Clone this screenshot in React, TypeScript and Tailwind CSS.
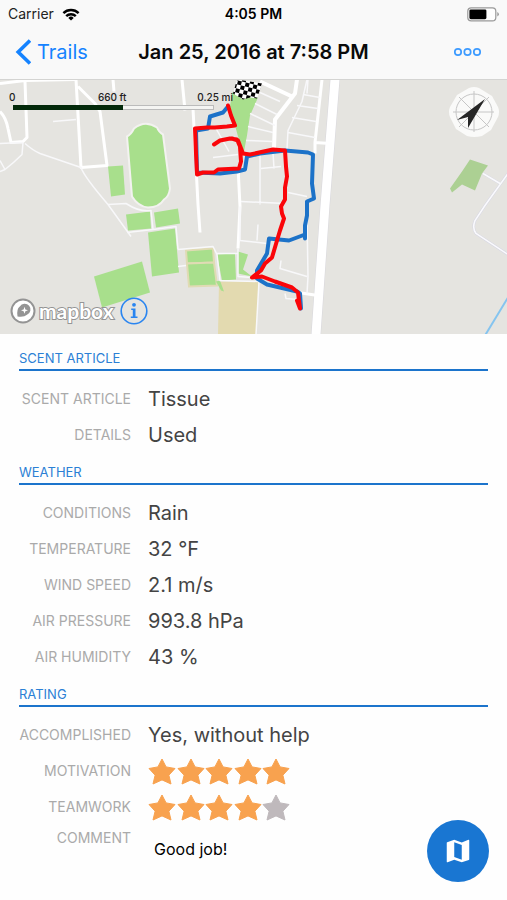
import { useState } from "react";
import type { ReactNode } from "react";
import { MdMap } from "react-icons/md";

const STAR_COUNT = 5;

function Star({ filled }: { filled: boolean }) {
  return (
    <svg viewBox="0 0 28 27" className={filled ? "w-7 h-[27px] text-[#f8a24f]" : "w-7 h-[27px] text-[#bfb9bc]"}>
      <path
        d="M14 1 18.1 8.900 27 10.500 20.900 17.200 23 26 14 21.900 5 26 7.100 17.200 1 10.500 9.900 8.900Z"
        fill="currentColor"
        stroke="currentColor"
        strokeWidth="1"
        strokeLinejoin="round"
      />
    </svg>
  );
}

function Stars({ value }: { value: number }) {
  return (
    <div role="img" aria-label={`${value} of ${STAR_COUNT} stars`} className="flex justify-between w-[142px]">
      {Array.from({ length: STAR_COUNT }, (_, i) => (
        <Star key={i} filled={i < value} />
      ))}
    </div>
  );
}

function Section({ title, children }: { title: string; children: ReactNode }) {
  return (
    <section>
      <h2 className="mx-[19px] py-px text-[13px] leading-5 text-[#2b80d5] border-b-2 border-[#1c74cc]">{title}</h2>
      <dl className="pt-[10px]">{children}</dl>
    </section>
  );
}

function Row({ label, children }: { label: string; children: ReactNode }) {
  return (
    <div className="flex items-center gap-[17px] h-9">
      <dt className="w-[131px] shrink-0 text-right text-sm text-[#aaa] whitespace-nowrap">{label}</dt>
      <dd className="text-xl text-[#444]">{children}</dd>
    </div>
  );
}

function StatusBar() {
  return (
    <div className="grid grid-cols-3 items-center h-7 pl-2 pr-2 text-sm leading-5 text-[#222]">
      <div className="flex items-center gap-2">
        <span>Carrier</span>
        <svg viewBox="0 0 18 13" className="w-[18px] h-[13px]" fill="none" stroke="#000" strokeWidth="2.4">
          <path d="M1.4 5.2A10.8 10.8 0 0 1 16.6 5.2" />
          <path d="M4.2 8.2A6.8 6.8 0 0 1 13.8 8.2" />
          <path d="M9 12.6 6.3 9.9A3.8 3.8 0 0 1 11.7 9.9Z" fill="#000" stroke="none" />
        </svg>
      </div>
      <span className="text-center font-semibold text-black whitespace-nowrap">4:05 PM</span>
      <svg viewBox="0 0 32 15" className="justify-self-end w-8 h-[15px]">
        <rect x="0.8" y="0.8" width="28" height="13" rx="3.4" fill="#fff" stroke="#999" strokeWidth="1.2" />
        <rect x="2.4" y="2.4" width="17" height="9.8" rx="1.4" fill="#000" />
        <path d="M30.3 5v4.6q1.6-.8 1.6-2.3T30.3 5Z" fill="#999" />
      </svg>
    </div>
  );
}

function NavBar() {
  return (
    <nav className="relative h-[51px] pl-[15px] pr-6 pb-1 flex items-center justify-between">
      <a href="#trails" className="flex items-center gap-1.5 text-xl text-[#1583ff]">
        <svg viewBox="0 0 16 26" className="w-4 h-[26px]" fill="none" stroke="currentColor" strokeWidth="3.6">
          <path d="M15 1.5 3.2 13 15 24.5" />
        </svg>
        Trails
      </a>
      <h1 className="absolute inset-x-0 text-center text-xl font-semibold text-[#0a0a0a] pointer-events-none">
        Jan 25, 2016 at 7:58 PM
      </h1>
      <button type="button" aria-label="More">
        <svg viewBox="0 0 30 10" className="w-[30px] h-2.5" fill="none" stroke="#3d9bff" strokeWidth="1.7">
          <circle cx="5" cy="5" r="3.2" />
          <circle cx="14.5" cy="5" r="3.2" />
          <circle cx="24" cy="5" r="3.2" />
        </svg>
      </button>
    </nav>
  );
}

function TrailMap() {
  return (
    <svg viewBox="0 79 507 255" preserveAspectRatio="xMidYMid slice" className="block w-full h-full">
      <defs>
        <pattern id="checker" width="8" height="8" patternUnits="userSpaceOnUse" patternTransform="translate(238 80) rotate(14)">
          <rect width="8" height="8" fill="#fff" />
          <path d="M0 0h4v4h-4zM4 4h4v4h-4z" fill="#000" />
        </pattern>
      </defs>
      <rect y="79" width="507" height="255" fill="#e5e4e0" />

      {/* parks and fields */}
      <g fill="#a8df8c">
        <path d="M108 166 123 165 125 194 111 196Z" />
        <path d="M126 214 150 211 151 228 128 230Z" />
        <path d="M154 212 178 208 180 223 156 227Z" />
        <path d="M148 232 175 228 179 272 152 276Z" />
        <path d="M94 276 142 261 150 292 102 307Z" />
        <path d="M232 92 258 97 250 115 247 135 244 151 238 136 230 106Z" />
        <path d="M217 254 235 253 236 279 222 280Z" />
        <path d="M238 251 248 254 243 269 252 276 238 273Z" />
      </g>
      <path
        d="M127 136Q131 134 134 128 145 119 157 127 159 132 163 134L170 188Q169 196 164 199 159 207 148 207 138 206 132 196Z"
        fill="#a8df8c"
        stroke="#f3f2f0"
        strokeWidth="2"
      />
      <g fill="#a8df8c" stroke="#e0dbb4" strokeWidth="2">
        <path d="M186 250 213 248 214 262 187 263Z" />
        <path d="M187 263 214 262 217 285 189 286Z" />
      </g>
      <path d="M219 281 259 281 256 334 218 334Z" fill="#e3dab0" />
      <path d="M216 281 220 280 224 291 221 290Z" fill="#a8df8c" />
      <path d="M470 159 488 165 482 173 475 190 462 184 452 192 450 188 462 171Z" fill="#acd093" />

      {/* main roads */}
      <g fill="none" stroke="#fff" strokeLinejoin="round">
        <path d="M335 79 325 205 316 334" stroke="#d8d7dc" strokeWidth="10" />
        <path d="M335 79 325 205 316 334" strokeWidth="9" />
        <path d="M0 111Q6 117 8 128L11 142 23 141 27 137 25 81M0 83 25 80 75 79" strokeWidth="3" />
        <path d="M76 79 81 167 107 165 100 111 95 103 78 86M113 79 114 91" strokeWidth="3" />
        <path d="M182 79 185 110M193 108 198 204 200 232M238 166 240 206 238 248" strokeWidth="3" />
        <path d="M297 79 295 93 275 119 274 148M260 81 292 96" strokeWidth="4" />
        <path d="M322 79 315 142 315 153M315 142 330 143M298 292 318 295" strokeWidth="3" />
      </g>

      {/* paths and parcel lines */}
      <g fill="none" stroke="#f8f8fa" strokeWidth="1.5" strokeLinejoin="round">
        <path d="M0 143 23 142 22 154Q14 162 5 169L0 171M0 160 5 169" />
        <path d="M25 143Q33 150 40 153L81 167Q84 176 108 204L131 236" />
        <path d="M108 204 126 203Q140 212 151 210L153 229 176 226 178 249M153 229 127 232M53 121 76 119" />
        <path d="M178 249 213 246 217 254 220 280 259 281 256 334M178 266 186 265M217 253 238 253" />
        <path d="M238 248 238 276 252 277M240 206 240 240 267 243M258 224 257 240" />
        <path d="M260 92 280 101M255 103 277 114M250 113 275 125M248 126 273 132M246 140 273 141" />
        <path d="M307 79 302 101 288 130 287 149M303 94 320 97M297 105 318 108M292 117 316 121M288 132 315 137M308 79 307 93" />
        <path d="M260 154 260 204M241 201 285 203M213 157 238 154M216 128 229 151M273 152 274 168M261 168 281 166M288 192 307 196" />
        <path d="M307 216 308 276 307 293M281 260 280 268 307 276M285 293 286 298 298 299" />
      </g>
      <path
        d="M508 173 485 205 475 220Q472 228 476 233L508 254M483 173 500 183"
        fill="none"
        stroke="#d6d6e4"
        strokeWidth="2.6"
      />
      <path
        d="M508 173 485 205 475 220Q472 228 476 233L508 254M483 173 500 183"
        fill="none"
        stroke="#fafafc"
        strokeWidth="1.6"
      />
      <path d="M508 297 485 335" stroke="#85c4ef" strokeWidth="2" />
      <path d="M237 79 262 83 257 98 250 97 243 99 233 93Z" fill="url(#checker)" />

      {/* runner and dog tracks */}
      <g fill="none" strokeWidth="4" strokeLinecap="round" strokeLinejoin="round">
        <path
          d="M228 106 223 112 210 116 208 128 196 130 197 172 220 173 237 171 245 169 247 156 260 153 285 150 308 152 313 154 312 183 314 198 307 201 307 215 305 225 305 238 305 234 289 240 269 238 267 253 257 270 257 278 267 284 297 291 300 293 301 308"
          stroke="#1c72c8"
        />
        <path
          d="M228 105 231 115 235 125 227 126 215 127 207 127 195 128 196 153 197 174 203 172 214 172 218 169 239 168 241 161 240 146 237 139 230 138 220 140 214 144M232 138 238 140 243 153 250 154 273 149 285 150 286 166 287 176 285 187 285 199 281 206 282 213 284 218 280 230 277 240 272 257 265 263 261 270 252 277 262 276 275 281 292 287 298 292 300 308 297 300"
          stroke="#fa0509"
        />
      </g>
    </svg>
  );
}

function ScaleBar() {
  return (
    <div className="absolute left-[13px] top-[11px] w-[201px] text-[10px] leading-3 font-medium text-[#222]">
      <div className="flex justify-between -ml-1 -mr-[19px]">
        <span className="w-[18px]">0</span>
        <span>660 ft</span>
        <span>0.25 mi</span>
      </div>
      <div className="mt-0.5 h-[5px] bg-[#f4f4f2] border border-[#bbb]">
        <div className="-m-px w-[110px] h-[5px] bg-[#03290a]" />
      </div>
    </div>
  );
}

function Compass() {
  return (
    <button type="button" aria-label="Reset north" className="absolute right-2 top-[7px]">
      <svg viewBox="-25 -25 50 50" className="block w-[50px] h-[50px]">
        <path
          d="M-5-24Q0-26 5-24L18-16 24-5Q26 0 24 5L17 18 8 24Q0 26-7 24L-18 17-24 5Q-26 0-24-5L-17-17Z"
          fill="#fafaf9"
        />
        <g fill="none" stroke="#c6c6c6" strokeWidth="1">
          <circle r="18" />
          <path d="M0-21V20M-21 0H20M-15-15 15 15M-15 15 15-15" />
        </g>
        <path d="M11-13-6 16-6 5-17 8Z" fill="#262626" />
      </svg>
    </button>
  );
}

function Attribution() {
  return (
    <div className="absolute left-[10px] bottom-[9px] flex items-center">
      <a href="#mapbox" className="flex items-center gap-[3px]">
        <svg viewBox="0 0 26 26" className="w-[26px] h-[26px]">
          <circle cx="13" cy="13" r="11.5" fill="#fff" stroke="#949494" strokeWidth="2" />
          <path d="M7.500 18.500Q6.300 11 9.800 8.400A5.800 5.800 0 1 1 17 16.800Q14 19.500 7.500 18.500Z" fill="#949494" />
          <path d="M14.500 8.800 15.400 11.400 18 12.300 15.400 13.200 14.500 15.800 13.600 13.200 11 12.300 13.600 11.400Z" fill="#fff" />
        </svg>
        <span className="font-['Lato',sans-serif] text-[21px] leading-6 font-bold text-white [-webkit-text-stroke:2px_#949494] [paint-order:stroke_fill]">
          mapbox
        </span>
      </a>
      <button type="button" aria-label="Map information" className="ml-[6px]">
        <svg viewBox="0 0 28 28" className="block w-7 h-7">
          <circle cx="14" cy="14" r="12.8" fill="none" stroke="#2a85f0" strokeWidth="1.6" />
          <circle cx="14" cy="7.800" r="1.900" fill="#2a85f0" />
          <path d="M11.200 11.500H15.500V19.500H17.500V21H10.800V19.500H12.800V13H11.200Z" fill="#2a85f0" />
        </svg>
      </button>
    </div>
  );
}

export default function App() {
  const [comment, setComment] = useState("Good job!");

  return (
    <div className="min-h-screen bg-[#fefefe] font-['Inter','Liberation_Sans',sans-serif]">
      <header className="bg-[#f9f9f9] border-b border-[#d4d4d2]">
        <StatusBar />
        <NavBar />
      </header>

      <div className="relative h-[254px] overflow-hidden">
        <TrailMap />
        <ScaleBar />
        <Compass />
        <Attribution />
      </div>

      <main className="flex flex-col gap-2 pt-[13px]">
        <Section title="SCENT ARTICLE">
          <Row label="SCENT ARTICLE">Tissue</Row>
          <Row label="DETAILS">Used</Row>
        </Section>

        <Section title="WEATHER">
          <Row label="CONDITIONS">Rain</Row>
          <Row label="TEMPERATURE">32 °F</Row>
          <Row label="WIND SPEED">2.1 m/s</Row>
          <Row label="AIR PRESSURE">993.8 hPa</Row>
          <Row label="AIR HUMIDITY">43 %</Row>
        </Section>

        <Section title="RATING">
          <Row label="ACCOMPLISHED">Yes, without help</Row>
          <Row label="MOTIVATION">
            <Stars value={5} />
          </Row>
          <Row label="TEAMWORK">
            <Stars value={4} />
          </Row>
          <div className="flex items-start gap-[17px] pt-[3px]">
            <dt className="w-[131px] shrink-0 text-right text-sm text-[#aaa]">
              <label htmlFor="comment">COMMENT</label>
            </dt>
            <dd className="flex-1 pr-24">
              <textarea
                id="comment"
                rows={1}
                value={comment}
                onChange={e => setComment(e.target.value)}
                className="block w-full px-1.5 pt-[11px] text-base leading-5 text-black bg-transparent resize-none overflow-hidden focus:outline-none"
              />
            </dd>
          </div>
        </Section>
      </main>

      <button
        type="button"
        aria-label="Show map"
        className="fixed right-[18px] bottom-[18px] flex items-center justify-center w-[62px] h-[62px] rounded-full bg-[#1976d2] text-white"
      >
        <MdMap size={30} />
      </button>
    </div>
  );
}
